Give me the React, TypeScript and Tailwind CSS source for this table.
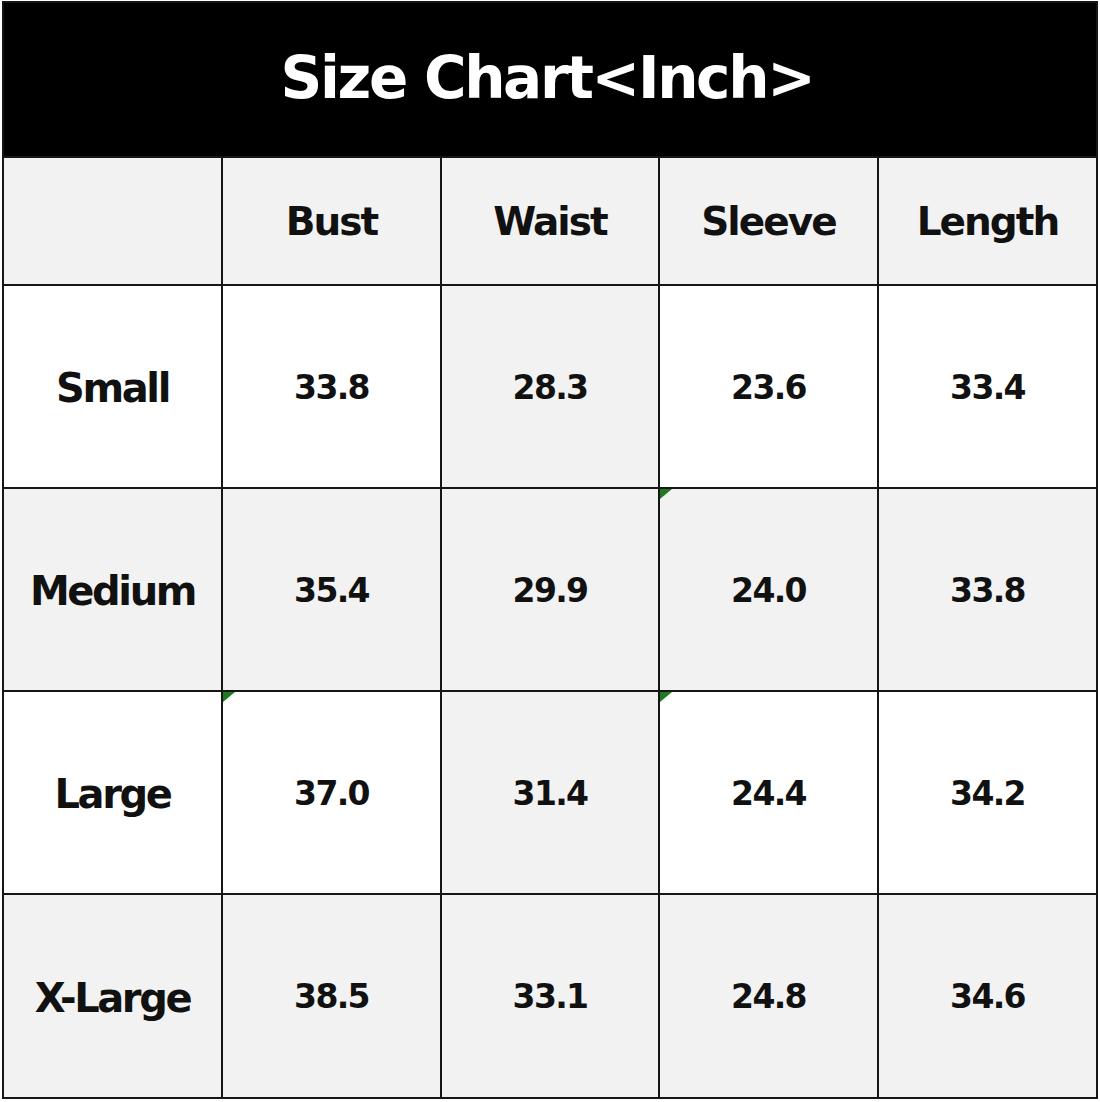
const columns = ["Bust", "Waist", "Sleeve", "Length"];

const rows = [
  { size: "Small", values: ["33.8", "28.3", "23.6", "33.4"], shaded: false },
  { size: "Medium", values: ["35.4", "29.9", "24.0", "33.8"], shaded: true },
  { size: "Large", values: ["37.0", "31.4", "24.4", "34.2"], shaded: false },
  { size: "X-Large", values: ["38.5", "33.1", "24.8", "34.6"], shaded: true },
];

// excel-style "number stored as text" markers
const flagged = ["Medium-2", "Large-0", "Large-2"];

const widths = ["w-[219px]", "w-[219px]", "w-[218px]", "w-[219px]", "w-[219px]"];

const Flag = () => (
  <span className="absolute left-0 top-0 h-[10px] w-[12px] bg-[#1f7a22] [clip-path:polygon(0_0,100%_0,0_100%)]" />
);

export default function App() {
  return (
    <div
      className="min-h-[1102px] w-[1100px] bg-white pl-[2px] pt-[1px] text-[#111]"
      style={{ fontFamily: '"DejaVu Sans", Verdana, sans-serif' }}
    >
      <div className="w-[1096px] border-l-2 border-t-2 border-[#161616]">
        {/* Title */}
        <div className="flex h-[155px] items-center justify-center border-r-2 border-b-2 border-[#161616] bg-black">
          <h1 className="pb-[2px] pr-[6px] text-[58px] font-bold tracking-[-0.04em] text-white">
            Size Chart&lt;Inch&gt;
          </h1>
        </div>

        {/* Column headers */}
        <div className="flex">
          <div className={`${widths[0]} h-[128px] border-r-2 border-b-2 border-[#161616] bg-[#f2f2f2]`} />
          {columns.map((c, i) => (
            <div
              key={c}
              className={`${widths[i + 1]} flex h-[128px] items-center justify-center border-r-2 border-b-2 border-[#161616] bg-[#f2f2f2] pt-[3px] text-[39px] font-bold tracking-[-0.05em]`}
            >
              {c}
            </div>
          ))}
        </div>

        {/* Data rows */}
        {rows.map((r, ri) => (
          <div key={r.size} className="flex">
            <div
              className={`${widths[0]} flex ${ri === 3 ? "h-[204px]" : "h-[203px]"} items-center justify-center border-r-2 border-b-2 border-[#161616] pt-[3px] text-[40px] font-bold tracking-[-0.06em] ${
                r.shaded ? "bg-[#f2f2f2]" : "bg-white"
              }`}
            >
              {r.size}
            </div>
            {r.values.map((v, vi) => (
              <div
                key={vi}
                className={`relative ${widths[vi + 1]} flex ${ri === 3 ? "h-[204px]" : "h-[203px]"} items-center justify-center border-r-2 border-b-2 border-[#161616] pt-[2px] text-[33px] font-bold tracking-[-0.05em] ${
                  r.shaded || vi === 1 ? "bg-[#f2f2f2]" : "bg-white"
                }`}
              >
                {flagged.includes(`${r.size}-${vi}`) && <Flag />}
                {v}
              </div>
            ))}
          </div>
        ))}
      </div>
    </div>
  );
}
